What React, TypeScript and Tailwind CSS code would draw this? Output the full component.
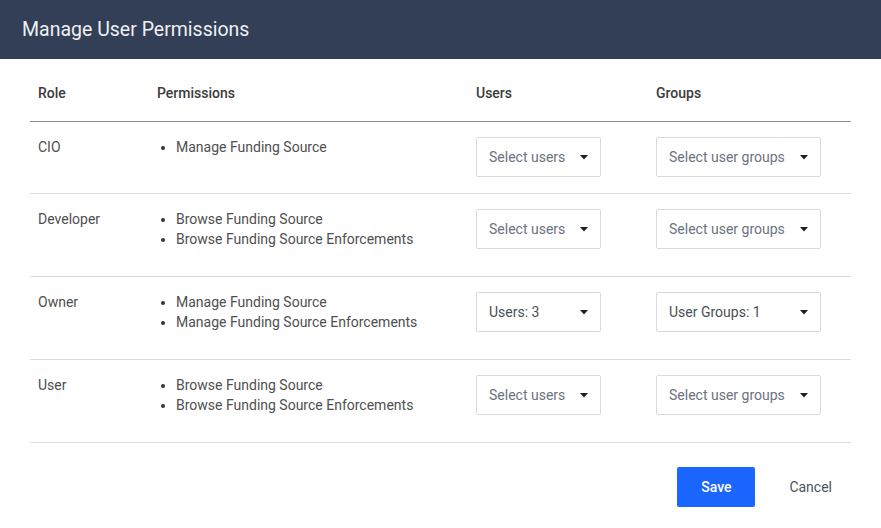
import React from "react";

type Row = {
  role: string;
  perms: string[];
  users: string;
  groups: string;
  h: string;
};

const rows: Row[] = [
  { role: "CIO", perms: ["Manage Funding Source"], users: "Select users", groups: "Select user groups", h: "h-[72px]" },
  { role: "Developer", perms: ["Browse Funding Source", "Browse Funding Source Enforcements"], users: "Select users", groups: "Select user groups", h: "h-[83px]" },
  { role: "Owner", perms: ["Manage Funding Source", "Manage Funding Source Enforcements"], users: "Users: 3", groups: "User Groups: 1", h: "h-[83px]" },
  { role: "User", perms: ["Browse Funding Source", "Browse Funding Source Enforcements"], users: "Select users", groups: "Select user groups", h: "h-[83px]" },
];

function Caret() {
  return (
    <svg width="8" height="5" viewBox="0 0 8 5" className="shrink-0">
      <path d="M0 0 H8 L4 4.5 Z" fill="#1f1f1f" />
    </svg>
  );
}

function Select({ label, w, selected }: { label: string; w: string; selected: boolean }) {
  return (
    <div
      className={`${w} h-[40px] border border-[#d6dbe0] rounded-[2px] bg-white flex items-center justify-between pl-[12px] pr-[12px] text-[14px] ${
        selected ? "text-[#4a4f57]" : "text-[#6b7280]"
      }`}
    >
      <span>{label}</span>
      <Caret />
    </div>
  );
}

export default function App() {
  return (
    <div
      className="w-[881px] h-[528px] bg-white flex flex-col"
      style={{ fontFamily: "Roboto, 'Noto Sans', sans-serif" }}
    >
      <div className="h-[59px] bg-[#333f57] flex items-center pl-[22px]">
        <h1 className="text-[19.5px] text-[#eef0f3] font-normal">Manage User Permissions</h1>
      </div>
      <div className="px-[30px] pt-[0px]">
        <div className="h-[63px] flex items-center border-b border-[#8c8c8c] text-[14px] font-medium text-[#3b3b3b] pt-[6px]">
          <div className="w-[119px] pl-[8px]">Role</div>
          <div className="w-[319px] pl-[8px]">Permissions</div>
          <div className="w-[180px] pl-[8px]">Users</div>
          <div className="pl-[8px]">Groups</div>
        </div>
        {rows.map((r) => (
          <div key={r.role} className={`${r.h} flex items-start border-b border-[#d8dde2] text-[14px] text-[#4f4f4f]`}>
            <div className="w-[119px] pl-[8px] pt-[15px] leading-[20px]">{r.role}</div>
            <div className="w-[319px] pl-[8px] pt-[15px]">
              <ul className="list-disc pl-[19px] leading-[20px] marker:text-[#333]">
                {r.perms.map((p) => (
                  <li key={p}>{p}</li>
                ))}
              </ul>
            </div>
            <div className="w-[180px] pl-[8px] pt-[15px]">
              <Select label={r.users} w="w-[125px]" selected={r.users !== "Select users"} />
            </div>
            <div className="pl-[8px] pt-[15px]">
              <Select label={r.groups} w="w-[165px]" selected={r.groups !== "Select user groups"} />
            </div>
          </div>
        ))}
        <div className="flex justify-end items-center pt-[24px] pr-[19px] gap-[34px]">
          <button className="w-[78px] h-[40px] bg-[#1a66ff] text-white text-[14px] font-medium rounded-[2px]">Save</button>
          <button className="text-[14px] text-[#4a5364]">Cancel</button>
        </div>
      </div>
    </div>
  );
}
